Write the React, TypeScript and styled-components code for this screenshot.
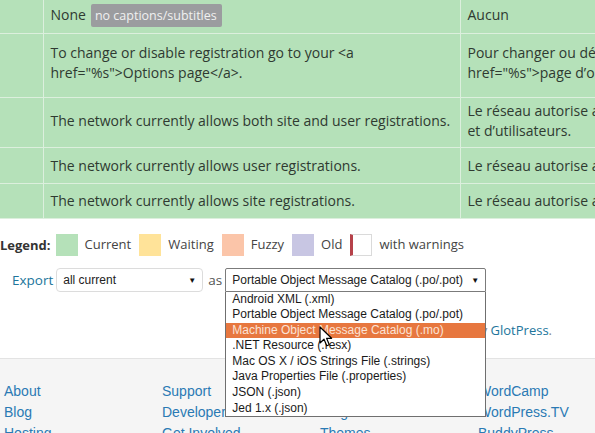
import React from "react";
import styled, { createGlobalStyle } from "styled-components";

const Global = createGlobalStyle`
  html, body { margin: 0; padding: 0; background: #fff; overflow: hidden; }
  body { font-family: "Open Sans", "DejaVu Sans", sans-serif; font-size: 13px; color: #32373c; }
  * { box-sizing: border-box; }
`;

const Page = styled.div`
  width: 595px;
  height: 433px;
  overflow: hidden;
  display: flex;
  flex-direction: column;
`;

const Table = styled.table`
  border-collapse: collapse;
  table-layout: fixed;
  width: 905px;
  flex: none;
`;

const Row = styled.tr<{ $h: number }>`
  height: ${(p) => p.$h}px;
  & > td {
    background: #b5e1b9;
    border: 1px solid #dcefdd;
    border-top: none;
    vertical-align: middle;
    line-height: 20px;
    font-size: 14px;
    color: #2f3a31;
  }
  & > td:first-child { border-left: none; }
`;

const Cell = styled.td<{ $pt?: number; $pb?: number }>`
  padding: ${(p) => p.$pt ?? 0}px 5px ${(p) => p.$pb ?? 0}px 7px;
`;

const Badge = styled.span`
  display: inline-block;
  margin-left: 5px;
  padding: 1px 5px 1px 4px;
  background: #9b9c9f;
  color: #f0f0f0;
  border-radius: 2px;
  font-size: 12.5px;
  line-height: 21px;
`;

const Legend = styled.div`
  display: flex;
  align-items: center;
  height: 22px;
  margin-top: 15px;
  color: #444;
  font-size: 13px;
`;

const LegendTitle = styled.strong`
  font-weight: 700;
  font-size: 13px;
  margin-right: 5px;
  color: #333;
`;

const Swatch = styled.span<{ $c: string; $warn?: boolean }>`
  width: 22px;
  height: 22px;
  background: ${(p) => p.$c};
  margin-right: 7px;
  ${(p) => (p.$warn ? "border: 1px solid #dadada; border-left: 3px solid #b6414a;" : "")}
`;

const LegendLabel = styled.span`
  margin-right: 8px;
  margin-top: -2px;
`;

const ExportRow = styled.div`
  display: flex;
  align-items: center;
  height: 24px;
  margin-top: 12px;
  padding-left: 12px;
  position: relative;
  z-index: 2;
`;

const ExportLink = styled.a`
  color: #21759b;
  text-decoration: none;
  margin-right: 3px;
  font-size: 13.5px;
`;

const As = styled.span`
  color: #555;
  margin: 0 3px 0 5px;
  font-size: 13.5px;
`;

const SelectWrap = styled.div`
  position: relative;
`;

const FakeSelect = styled.div<{ $w: number; $focus?: boolean }>`
  width: ${(p) => p.$w}px;
  height: 24px;
  display: flex;
  align-items: center;
  justify-content: space-between;
  padding: 0 6px 0 6px;
  background: #fff;
  border: 1px solid ${(p) => (p.$focus ? "#7b7b7b" : "#dcdcdc")};
  border-radius: ${(p) => (p.$focus ? "2px 2px 0 0" : "4px")};
  font-family: "Liberation Sans", Arial, sans-serif;
  font-size: 12px;
  color: #222;
`;

const Arrow = styled.span`
  font-size: 8px;
  color: #111;
  margin-top: 1px;
`;

const Dropdown = styled.ul`
  position: absolute;
  left: 0;
  top: 100%;
  width: 100%;
  margin: 0;
  padding: 0;
  list-style: none;
  background: #fff;
  border: 1px solid #6f6f6f;
  border-top: none;
  font-family: "Liberation Sans", Arial, sans-serif;
  font-size: 12px;
  color: #1a1a1a;
`;

const Option = styled.li<{ $active?: boolean }>`
  height: 15.6px;
  line-height: 15.6px;
  padding-left: 6px;
  white-space: nowrap;
  background: ${(p) => (p.$active ? "#e7773f" : "transparent")};
  color: ${(p) => (p.$active ? "#fbe3d6" : "#1a1a1a")};
`;

const Cursor = styled.svg`
  position: absolute;
  left: 94px;
  top: 58px;
  width: 14px;
  height: 22px;
`;

const Powered = styled.p`
  margin: 28px 0 0;
  padding-right: 43px;
  text-align: right;
  line-height: 20px;
  font-size: 13px;
  color: #888;
`;

const PoweredLink = styled.a`
  color: #21759b;
  text-decoration: none;
`;

const Footer = styled.footer`
  margin-top: 18px;
  flex: 1;
  background: #f5f5f5;
  border-top: 1px solid #e3e3e3;
  padding: 22px 0 0 4px;
  display: grid;
  grid-template-columns: repeat(4, 158px);
`;

const FooterCol = styled.ul`
  list-style: none;
  margin: 0;
  padding: 0;
`;

const FooterLink = styled.a`
  display: block;
  font-family: "Liberation Sans", Arial, sans-serif;
  font-size: 14px;
  line-height: 21px;
  color: #2a7ab4;
  text-decoration: none;
`;

const rows = [
  { h: 33, pt: 0, pb: 2, en: <>None<Badge>no captions/subtitles</Badge></>, fr: "Aucun" },
  {
    h: 64,
    pt: 0,
    pb: 4,
    en: 'To change or disable registration go to your <a href="%s">Options page</a>.',
    fr: 'Pour changer ou désactiver les inscriptions, allez sur votre <a href="%s">page d\u2019options</a>.',
  },
  {
    h: 50,
    pt: 0,
    pb: 3,
    en: "The network currently allows both site and user registrations.",
    fr: "Le réseau autorise actuellement à la fois les inscriptions de sites et d\u2019utilisateurs.",
  },
  {
    h: 36,
    pt: 2,
    pb: 0,
    en: "The network currently allows user registrations.",
    fr: "Le réseau autorise actuellement les inscriptions d\u2019utilisateurs.",
  },
  {
    h: 35,
    pt: 0,
    pb: 0,
    en: "The network currently allows site registrations.",
    fr: "Le réseau autorise actuellement les inscriptions de sites.",
  },
];

const legend = [
  { c: "#b5e1b9", l: "Current" },
  { c: "#ffe399", l: "Waiting" },
  { c: "#fbc5a9", l: "Fuzzy" },
  { c: "#c8c6e3", l: "Old" },
];

const formats = [
  "Android XML (.xml)",
  "Portable Object Message Catalog (.po/.pot)",
  "Machine Object Message Catalog (.mo)",
  ".NET Resource (.resx)",
  "Mac OS X / iOS Strings File (.strings)",
  "Java Properties File (.properties)",
  "JSON (.json)",
  "Jed 1.x (.json)",
];

const footerCols = [
  ["About", "Blog", "Hosting"],
  ["Support", "Developers", "Get Involved"],
  ["Showcase", "Plugins", "Themes"],
  ["WordCamp", "WordPress.TV", "BuddyPress"],
];

export default function App() {
  return (
    <>
      <Global />
      <Page>
        <Table>
          <colgroup>
            <col style={{ width: 43 }} />
            <col style={{ width: 417 }} />
            <col style={{ width: 445 }} />
          </colgroup>
          <tbody>
            {rows.map((r, i) => (
              <Row key={i} $h={r.h}>
                <Cell />
                <Cell $pt={r.pt} $pb={r.pb}>{r.en}</Cell>
                <Cell $pt={r.pt} $pb={r.pb}>{r.fr}</Cell>
              </Row>
            ))}
          </tbody>
        </Table>

        <Legend>
          <LegendTitle>Legend:</LegendTitle>
          {legend.map((x) => (
            <React.Fragment key={x.l}>
              <Swatch $c={x.c} />
              <LegendLabel>{x.l}</LegendLabel>
            </React.Fragment>
          ))}
          <Swatch $c="#fff" $warn />
          <LegendLabel>with warnings</LegendLabel>
        </Legend>

        <ExportRow>
          <ExportLink href="#">Export</ExportLink>
          <FakeSelect $w={147}>
            <span>all current</span>
            <Arrow>▼</Arrow>
          </FakeSelect>
          <As>as</As>
          <SelectWrap>
            <FakeSelect $w={261} $focus>
              <span>Portable Object Message Catalog (.po/.pot)</span>
              <Arrow>▼</Arrow>
            </FakeSelect>
            <Dropdown>
              {formats.map((f, i) => (
                <Option key={f} $active={i === 2}>{f}</Option>
              ))}
            </Dropdown>
            <Cursor viewBox="0 0 14 22">
              <path
                d="M1 1 L1 17 L5 13.2 L7.8 19.8 L10.3 18.7 L7.6 12.3 L12.6 12.3 Z"
                fill="#fff"
                stroke="#000"
                strokeWidth="1.2"
                strokeLinejoin="round"
              />
            </Cursor>
          </SelectWrap>
        </ExportRow>

        <Powered>
          Proudly powered by <PoweredLink href="#">GlotPress</PoweredLink>.
        </Powered>

        <Footer>
          {footerCols.map((col, i) => (
            <FooterCol key={i}>
              {col.map((l) => (
                <li key={l}>
                  <FooterLink href="#">{l}</FooterLink>
                </li>
              ))}
            </FooterCol>
          ))}
        </Footer>
      </Page>
    </>
  );
}
